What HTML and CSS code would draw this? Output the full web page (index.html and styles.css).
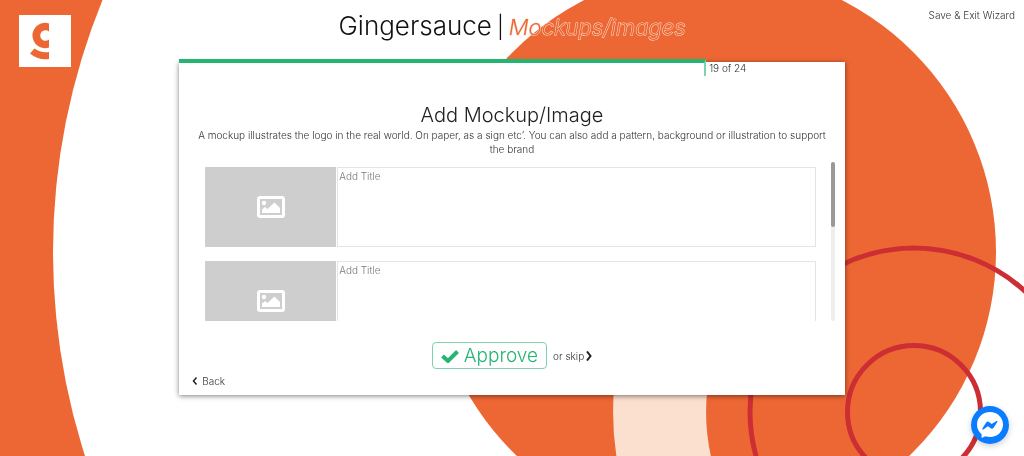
FILE: index.html
```
<!DOCTYPE html>
<html lang="en">
  <head>
    <meta charset="UTF-8">
    <meta name="viewport" content="width=device-width, initial-scale=1.0">
    <title>Gingersauce | Mockups/images</title>
    <link rel="stylesheet" href="styles.css">
  </head>
  <body>
    <svg class="background" viewBox="0 0 1024 456" preserveAspectRatio="xMidYMid slice" aria-hidden="true">
      <rect width="1024" height="456" fill="#ed6734"/>
      <circle cx="719" cy="252" r="666" fill="#fff"/>
      <circle cx="713" cy="252" r="283" fill="#ed6734"/>
      <path d="M665 360A254.500 254.500 0 0 0 914 666.500" fill="none" stroke="#fbdfcf" stroke-width="93"/>
      <circle cx="914" cy="412" r="164" fill="none" stroke="#cc2e33" stroke-width="5"/>
      <circle cx="914" cy="412" r="66.500" fill="none" stroke="#cc2e33" stroke-width="5"/>
    </svg>

    <header class="header">
      <a class="logo" href="#" aria-label="Gingersauce">
        <svg viewBox="0 0 52 52">
          <path d="M30 8.400A12.700 12.700 0 1 0 30 32.600V24.500A5.300 5.300 0 1 1 30 16.500Z" fill="#ed6734"/>
          <path d="M15.500 33.500Q21.500 38 30 37V44Q19 45.500 11 38.500Z" fill="#ed6734"/>
        </svg>
      </a>
      <h1 class="title">Gingersauce <span>|</span> <em>Mockups/images</em></h1>
      <a class="exit" href="#">Save &amp; Exit Wizard</a>
    </header>

    <main class="card">
      <div class="progress">
        <div class="progress-bar" style="width: 79.17%"></div>
        <span class="progress-text">19 of 24</span>
      </div>

      <h2>Add Mockup/Image</h2>
      <p class="description">A mockup illustrates the logo in the real world. On paper, as a sign etc’. You can also add a pattern, background or illustration to support the brand</p>

      <div class="scroll-area">
        <div class="list">
          <div class="item">
            <button class="thumb" type="button" aria-label="Add image">
              <svg viewBox="0 0 28 22"><use href="#picture"/></svg>
            </button>
            <textarea placeholder="Add Title" aria-label="Title"></textarea>
          </div>
          <div class="item">
            <button class="thumb" type="button" aria-label="Add image">
              <svg viewBox="0 0 28 22"><use href="#picture"/></svg>
            </button>
            <textarea placeholder="Add Title" aria-label="Title"></textarea>
          </div>
          <div class="item">
            <button class="thumb" type="button" aria-label="Add image">
              <svg viewBox="0 0 28 22"><use href="#picture"/></svg>
            </button>
            <textarea placeholder="Add Title" aria-label="Title"></textarea>
          </div>
          <div class="item">
            <button class="thumb" type="button" aria-label="Add image">
              <svg viewBox="0 0 28 22"><use href="#picture"/></svg>
            </button>
            <textarea placeholder="Add Title" aria-label="Title"></textarea>
          </div>
        </div>
        <div class="scrollbar"><div class="scrollbar-thumb"></div></div>
      </div>

      <div class="actions">
        <button class="approve" type="button">
          <svg viewBox="0 0 18 14"><path d="M1.500 7L7 12L16.500 2.500" fill="none" stroke="#26b473" stroke-width="4"/></svg>
          Approve
        </button>
        <a class="skip" href="#">or skip
          <svg viewBox="0 0 6 10"><path d="M1 0.500L4.500 5L1 9.500" fill="none" stroke="#222" stroke-width="2"/></svg>
        </a>
      </div>

      <a class="back" href="#">
        <svg viewBox="0 0 6 8"><path d="M4.500 0.500L1.500 4L4.500 7.500" fill="none" stroke="#222" stroke-width="1.500"/></svg>
        Back
      </a>
    </main>

    <button class="messenger" type="button" aria-label="Messenger">
      <svg viewBox="0 0 38 38">
        <circle cx="19" cy="19" r="19" fill="#0a7cff"/>
        <path d="M19 6C11.500 6 6 11.500 6 18.500C6 22.500 7.800 26 10.600 28.200V32L14.300 30.200C15.800 30.700 17.400 31 19 31C26.500 31 32 25.500 32 18.500C32 11.500 26.500 6 19 6Z" fill="#fff"/>
        <path d="M11.300 22.600L15.200 16.500Q16.400 14.900 18 16L20.700 18.100L25.500 15.100Q27 14.500 26.300 16L22.600 21.700Q21.300 23.300 19.700 22.200L16.900 20.200L12.400 23.500Q11 24 11.300 22.600Z" fill="#0a7cff"/>
      </svg>
    </button>

    <svg class="symbols" aria-hidden="true">
      <symbol id="picture" viewBox="0 0 28 22">
        <rect x="1.500" y="1.500" width="25" height="19" rx="1.500" fill="none" stroke="#fff" stroke-width="3"/>
        <circle cx="7" cy="7" r="2.200" fill="#fff"/>
        <path d="M5 17V13.500L8 11L10.500 13L17.500 6.500L23 12V17Z" fill="#fff"/>
      </symbol>
    </svg>
  </body>
</html>
```
FILE: styles.css
```
* {
  box-sizing: border-box;
}
body {
  margin: 0;
  min-height: 100vh;
  overflow-x: hidden;
  font-family: Inter, "Open Sans", sans-serif;
  font-size: 10px;
  font-weight: 300;
  color: #333;
}
a {
  color: inherit;
  text-decoration: none;
}
button {
  padding: 0;
  border: 0;
  font: inherit;
  cursor: pointer;
}
svg {
  display: block;
}
.background {
  position: fixed;
  top: 0;
  left: 0;
  width: 100%;
  height: 100%;
  z-index: -1;
}
.symbols {
  position: absolute;
  width: 0;
  height: 0;
}

/* header */
.header {
  display: grid;
  grid-template-columns: 1fr auto 1fr;
  align-items: start;
  height: 62px;
  padding: 8px 9px 0;
}
.logo {
  width: 52px;
  height: 52px;
  margin: 7px 0 0 10px;
  background-color: #fff;
}
.title {
  display: flex;
  gap: 5px;
  align-items: baseline;
  margin: 0;
  font-size: 26px;
  font-weight: 300;
  line-height: 36px;
  color: #111;
}
.title span {
  font-size: 22px;
}
.title em {
  font-size: 22px;
  color: #ed6734;
  -webkit-text-stroke: 1px #fbdfcf;
  paint-order: stroke fill;
}
.exit {
  justify-self: end;
  line-height: 14px;
}

/* wizard card */
.card {
  width: 65%;
  margin: 0 auto;
  padding-bottom: 7px;
  background-color: #fff;
  box-shadow: 0 1px 5px rgba(0, 0, 0, 0.5);
}
.progress {
  display: flex;
  height: 42px;
}
.progress-bar {
  height: 17px;
  margin-top: -3px;
  border-top: 4px solid #26b473;
  border-right: 2px solid #7fd3ac;
}
.progress-text {
  padding-left: 3px;
  line-height: 13px;
}
h2 {
  margin: 0;
  font-size: 20px;
  font-weight: 300;
  line-height: 22px;
  text-align: center;
  color: #222;
}
.description {
  margin: 2px 16px 0;
  line-height: 14px;
  text-align: center;
}
.scroll-area {
  display: flex;
  height: 159px;
  margin: 6px 10px 0 26px;
}
.list {
  flex: 1;
  padding: 5px 15px 8px 0;
  overflow-y: auto;
  scrollbar-width: none;
}
.scrollbar {
  width: 4px;
  border-radius: 2px;
  background-color: #eee;
}
.scrollbar-thumb {
  height: 41%;
  border-radius: 2px;
  background-color: #999;
}
.item {
  display: flex;
  gap: 1px;
  height: 80px;
  margin-bottom: 14px;
}
.thumb {
  display: flex;
  flex: 0 0 131px;
  align-items: center;
  justify-content: center;
  background-color: #cecece;
}
.thumb svg {
  width: 28px;
  height: 22px;
}
textarea {
  flex: 1;
  padding: 1px;
  border: 1px solid #e4e4e4;
  font: inherit;
  line-height: 14px;
  resize: none;
}
textarea::placeholder {
  color: #777;
}

/* buttons */
.actions {
  display: flex;
  align-items: center;
  justify-content: center;
  gap: 6px;
  margin-top: 21px;
}
.approve {
  display: flex;
  align-items: center;
  gap: 5px;
  height: 27px;
  padding: 0 8px;
  border: 1px solid #7fd3ac;
  border-radius: 4px;
  background-color: #fff;
  font-size: 19px;
  color: #26b473;
}
.approve svg {
  width: 18px;
  height: 14px;
}
.skip {
  display: flex;
  align-items: center;
  gap: 2px;
}
.skip svg {
  width: 6px;
  height: 10px;
}
.back {
  display: inline-flex;
  align-items: center;
  gap: 4px;
  margin: 5px 0 0 13px;
  line-height: 14px;
}
.back svg {
  width: 6px;
  height: 8px;
}

.messenger {
  position: fixed;
  right: 15px;
  bottom: 12px;
  width: 38px;
  height: 38px;
  border-radius: 50%;
  background: none;
  box-shadow: 0 2px 6px rgba(0, 0, 0, 0.2);
}
```
